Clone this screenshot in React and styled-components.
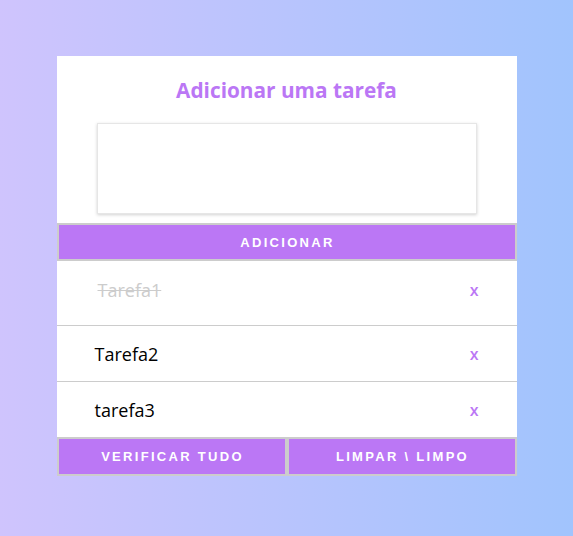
import React, { useState } from "react"
import styled, { createGlobalStyle } from "styled-components"

const GlobalStyle = createGlobalStyle`
  html, body {
    margin: 0;
    padding: 0;
  }
  body {
    min-height: 100vh;
    background: linear-gradient(to right, #cfc4fd, #a1c4fd);
    font-family: "Open Sans", sans-serif;
  }
`

const purple = "#bb77f5"

const Page = styled.div`
  display: flex;
  justify-content: center;
  padding-top: 56px;
`

const Card = styled.div`
  width: 460px;
  background: #fff;
  display: flex;
  flex-direction: column;
`

const Header = styled.div`
  display: flex;
  flex-direction: column;
  align-items: center;
  padding: 20px 0 9px;
`

const Title = styled.h2`
  margin: 0 0 19px;
  font-size: 20.8px;
  line-height: 28px;
  font-weight: 700;
  color: ${purple};
`

const Input = styled.textarea`
  box-sizing: border-box;
  width: 380px;
  height: 91px;
  border: 1px solid #e6e6e6;
  box-shadow: 0 1px 3px rgba(0, 0, 0, 0.18);
  resize: none;
  outline: none;
  font-family: "Open Sans", sans-serif;
  font-size: 16px;
`

const Button = styled.button`
  flex: ${p => (p.$grow ? "1 1 0" : "none")};
  box-sizing: border-box;
  height: ${p => p.$height || 38}px;
  border: 2px solid #cccccc;
  background: ${purple};
  color: #fff;
  font-family: "Liberation Sans", Arial, sans-serif;
  font-weight: 700;
  font-size: 13px;
  letter-spacing: 2.3px;
  cursor: pointer;
  padding: 0 0 0 2px;
`

const List = styled.ul`
  list-style: none;
  margin: 0;
  padding: 0;
`

const Item = styled.li`
  display: flex;
  align-items: center;
  justify-content: space-between;
  height: ${p => (p.$first ? 58 : 55)}px;
  padding: 0 38px 0 ${p => (p.$first ? 41 : 38)}px;
  padding-bottom: ${p => (p.$first ? 6 : 0)}px;
  box-sizing: content-box;
  border-bottom: ${p => (p.$last ? "none" : "1px solid #cccccc")};
`

const ItemText = styled.span`
  font-size: 18px;
  color: ${p => (p.$done ? "#cccccc" : "#000")};
  text-decoration: ${p => (p.$done ? "line-through" : "none")};
`

const Remove = styled.span`
  color: ${purple};
  font-size: 16px;
  font-weight: 600;
  cursor: pointer;
`

const Footer = styled.div`
  display: flex;
`

export default function App() {
  const [tasks] = useState([
    { name: "Tarefa1", done: true },
    { name: "Tarefa2", done: false },
    { name: "tarefa3", done: false },
  ])

  return (
    <>
      <GlobalStyle />
      <Page>
        <Card>
          <Header>
            <Title>Adicionar uma tarefa</Title>
            <Input />
          </Header>
          <Button>ADICIONAR</Button>
          <List>
            {tasks.map((t, i) => (
              <Item key={t.name} $first={i === 0} $last={i === tasks.length - 1}>
                <ItemText $done={t.done}>{t.name}</ItemText>
                <Remove>x</Remove>
              </Item>
            ))}
          </List>
          <Footer>
            <Button $grow $height={39}>VERIFICAR TUDO</Button>
            <Button $grow $height={39}>LIMPAR \ LIMPO</Button>
          </Footer>
        </Card>
      </Page>
    </>
  )
}
